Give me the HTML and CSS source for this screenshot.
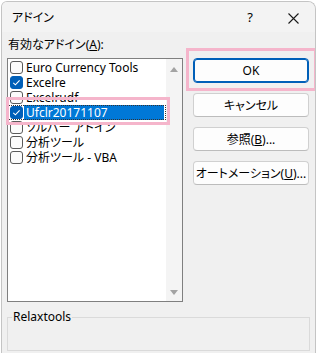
FILE: index.html
```html
<!DOCTYPE html>
<html>
<head>
    <meta charset="utf-8">
    <link rel="stylesheet" href="styles.css">
</head>
<body>
    <div class="window">
        <div class="titlebar">
            <span class="title">アドイン</span>
            <span class="help">?</span>
            <span class="close">
                <svg width="11" height="11" viewBox="0 0 11 11"><path d="M0.5 0.5 L10.5 10.5 M10.5 0.5 L0.5 10.5" stroke="#1a1a1a" stroke-width="1.1" fill="none"/></svg>
            </span>
        </div>

        <div class="main">
            <div class="label">有効なアドイン(<u>A</u>):</div>

            <div class="listbox">
                <ul class="items">
                    <li class="item"><span class="chk"></span><span class="name">Euro Currency Tools</span></li>
                    <li class="item"><span class="chk on"></span><span class="name">Excelre</span></li>
                    <li class="item"><span class="chk"></span><span class="name">Excelrudf</span></li>
                    <li class="item selected"><span class="chk on"></span><span class="name">Ufclr20171107</span></li>
                    <li class="item"><span class="chk"></span><span class="name">ソルバー アドイン</span></li>
                    <li class="item"><span class="chk"></span><span class="name">分析ツール</span></li>
                    <li class="item"><span class="chk"></span><span class="name">分析ツール - VBA</span></li>
                </ul>
                <div class="scrollbar">
                    <span class="arrow up"></span>
                    <span class="arrow down"></span>
                </div>
            </div>

            <div class="buttons">
                <button class="btn default">OK</button>
                <button class="btn">キャンセル</button>
                <button class="btn">参照(<u>B</u>)...</button>
                <button class="btn">オートメーション(<u>U</u>)...</button>
            </div>
        </div>

        <fieldset class="group">
            <legend>Relaxtools</legend>
        </fieldset>

        <div class="mark mark-item"></div>
        <div class="mark mark-ok"></div>
    </div>
</body>
</html>
```

FILE: styles.css
```css
html {
    background: #ffffff;
}

body {
    margin: 0;
    height: 353px;
    overflow: hidden;
    font-family: "Noto Sans", "Noto Sans CJK JP", sans-serif;
    font-feature-settings: "palt";
    font-size: 12px;
    color: #000;
}

.window {
    position: relative;
    box-sizing: border-box;
    margin: 1px 0 0 1px;
    width: 315px;
    height: 352px;
    overflow: hidden;
    background: #f0f0f0;
    border: 1px solid #c4c4c4;
    border-bottom: none;
    border-radius: 6px 8px 0 0;
}

.titlebar {
    display: flex;
    align-items: center;
    height: 30px;
    padding-left: 10px;
    background: #f3f3f3;
}

.title {
    flex: 1;
    font-size: 12px;
}

.help {
    font-size: 13px;
    margin-right: 35px;
}

.close {
    display: flex;
    margin-right: 16px;
    margin-top: 2px;
}

.main {
    display: grid;
    grid-template-columns: 176px 116px;
    column-gap: 10px;
    padding: 5px 0 0 5px;
}

.label {
    grid-column: 1 / 3;
    line-height: 16px;
    padding-left: 1px;
    margin-bottom: 5px;
}

.listbox {
    display: flex;
    height: 242px;
    background: #fff;
    border: 1px solid #7f7f7f;
}

.items {
    flex: 1;
    list-style: none;
    margin: 0;
    padding: 1px 0 0 0;
}

.item {
    display: flex;
    align-items: center;
    height: 15px;
    padding-left: 2px;
    white-space: nowrap;
}

.chk {
    box-sizing: border-box;
    width: 13px;
    height: 13px;
    border: 1px solid #5a5a5a;
    border-radius: 3px;
    background: #fbfbfb;
}

.chk.on {
    border-color: #005fb8;
    background: #005fb8 url("data:image/svg+xml;utf8,<svg xmlns='http://www.w3.org/2000/svg' width='11' height='11' viewBox='0 0 11 11'><path d='M2.3 5.8 L4.4 7.8 L8.6 3.4' stroke='white' stroke-width='1.1' fill='none'/></svg>") no-repeat center;
}

.name {
    padding-left: 3px;
    line-height: 15px;
}

.selected {
    outline: 1px dotted #333;
    outline-offset: -1px;
}

.selected .name {
    flex: 1;
    margin-left: 1px;
    margin-right: 2px;
    padding-left: 2px;
    background: #0078d7;
    color: #fff;
}

.scrollbar {
    position: relative;
    width: 16px;
    background: #f4f4f4;
}

.arrow {
    position: absolute;
    left: 4px;
    width: 0;
    height: 0;
    border-left: 4px solid transparent;
    border-right: 4px solid transparent;
}

.arrow.up {
    top: 8px;
    border-bottom: 5px solid #a3a3a3;
}

.arrow.down {
    bottom: 6px;
    border-top: 5px solid #a3a3a3;
}

.buttons {
    display: flex;
    flex-direction: column;
    gap: 10px;
}

.btn {
    height: 24px;
    font-family: inherit;
    font-feature-settings: "palt";
    font-size: 12px;
    color: #000;
    background: #fdfdfd;
    border: 1px solid #d0d0d0;
    border-bottom-color: #bcbcbc;
    border-radius: 4px;
    padding: 0;
}

.btn.default {
    height: 25px;
    border: 1px solid #005fb8;
    box-shadow: inset 0 0 0 1px #005fb8;
}

.group {
    margin: 7px 0 0 5px;
    width: 301px;
    height: 40px;
    padding: 0;
    border: 1px solid #dadada;
}

.group legend {
    margin-left: 4px;
    padding: 0 1px;
    line-height: 16px;
}

.mark {
    position: absolute;
    border: 3px solid #f5b5cb;
}

.mark-item {
    left: 4px;
    top: 95px;
    width: 158px;
    height: 22px;
}

.mark-ok {
    left: 184px;
    top: 46px;
    width: 125px;
    height: 37px;
}
```
